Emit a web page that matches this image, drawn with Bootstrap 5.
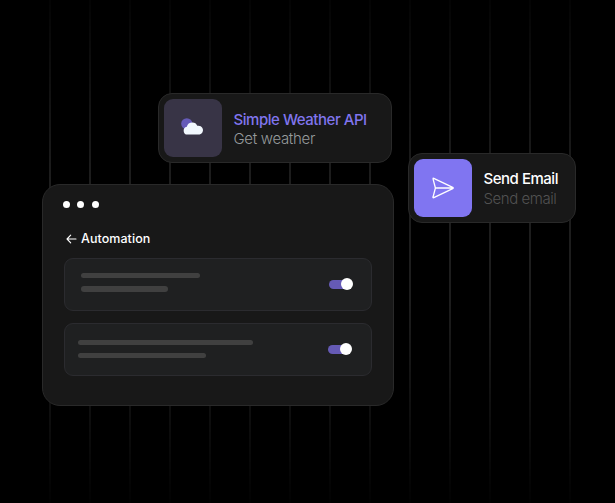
<!DOCTYPE html>
<html lang="en" data-bs-theme="dark">
<head>
<meta charset="utf-8">
<meta name="viewport" content="width=device-width, initial-scale=1">
<title>Automation</title>
<link rel="stylesheet" href="https://cdn.jsdelivr.net/npm/bootstrap@5.3.0/dist/css/bootstrap.min.css">
<style>
body{background:#000;font-family:Inter,"Liberation Sans",sans-serif}
.canvas{width:615px;height:503px}
.stripes{padding-left:49px;gap:38px;-webkit-mask-image:linear-gradient(#0002 0,#000 36%,#000 60%,#0001 100%);mask-image:linear-gradient(#0002 0,#000 36%,#000 60%,#0001 100%)}
.stripe{width:2px;flex:none;background:#1d1d1d}
.panel{background:#181818;border:1.5px solid #292929}
.tool{height:70px;border-radius:14px;padding-left:4.5px}
.tool-weather{left:158px;top:93px;width:234px}
.tool-weather .copy{padding-top:2px}
.tool-email{left:408px;top:153px;width:168px}
.tile{width:58px;height:58px;border-radius:9px;flex:none}
.tile-weather{background:#383446}
.tile-email{background:#8075f1}
.copy{margin-left:12px;padding-top:1.5px;font-size:15px;line-height:19.5px;white-space:nowrap}
.title{font-weight:500}
.weather-title{color:#8075ee;letter-spacing:-.46px}
.weather-sub{color:#969a9c;font-weight:300;letter-spacing:-.32px}
.email-title{color:#fff;letter-spacing:-.48px}
.email-sub{color:#525252;font-weight:300;letter-spacing:-.44px}
.win{left:42px;top:183.5px;width:351.5px;height:222px;border-radius:18px;padding:16px 20.5px 0 20.5px;border-width:1px}
.dots{gap:7.7px;height:7px;margin-left:-.5px}
.dot{width:7px;height:7px;background:#fff;margin-left:-.2px}
.heading{margin-top:21px;height:20px;padding-left:2px;gap:4.5px;font-size:12.5px;letter-spacing:.06px;font-weight:500;color:#fff;line-height:20px}
.step{width:308px;height:53px;background:#1f2021;border:1px solid #2b2b2f;border-radius:9px;padding:0 17.5px 0 16px}
.step-one{margin-top:9px}
.step-two{margin-top:12px;padding:0 18.5px 0 13.5px}
.bars{gap:8px}
.step-one .bars{margin-bottom:3.5px}
.line{height:5.3px;background:#404040}
.switch{width:24px;height:12px}
.switch::before{content:"";width:18px;height:9px;border-radius:5px 0 0 5px;background:#655ab5;margin-right:-6px}
.knob{width:12px;height:12px;background:#fff}
</style>
<script src="https://cdn.jsdelivr.net/npm/bootstrap@5.3.0/dist/js/bootstrap.bundle.min.js"></script>
</head>
<body class="overflow-hidden">
<main class="canvas position-relative overflow-hidden">
  <div class="stripes d-flex h-100" aria-hidden="true">
    <i class="stripe"></i><i class="stripe"></i><i class="stripe"></i><i class="stripe"></i><i class="stripe"></i><i class="stripe"></i><i class="stripe"></i><i class="stripe"></i><i class="stripe"></i><i class="stripe"></i><i class="stripe"></i><i class="stripe"></i><i class="stripe"></i><i class="stripe"></i>
  </div>

  <article class="panel tool tool-weather position-absolute d-flex align-items-center">
    <div class="tile tile-weather d-flex align-items-center justify-content-center">
      <svg width="24" height="20" viewBox="0 0 24 20"><circle cx="5.8" cy="5.8" r="5.6" fill="#665bb8"/><path d="M6.4 16.6A4 4 0 0 1 5.8 8.7Q6.8 4.4 11.4 4.4 15 4.4 16.3 7.8A4.5 4.5 0 1 1 18.6 16.6Z" fill="#f2f8fe"/></svg>
    </div>
    <div class="copy">
      <div class="title weather-title"><span>Simple Weather API</span></div>
      <div class="weather-sub"><span>Get weather</span></div>
    </div>
  </article>

  <article class="panel tool tool-email position-absolute d-flex align-items-center">
    <div class="tile tile-email d-flex align-items-center justify-content-center">
      <svg width="24" height="22" viewBox="0 0 24 22" fill="none" stroke="#fff" stroke-width="1.3" stroke-linejoin="round" stroke-linecap="round"><path d="M2.3 1.8Q1.6 1 2.8 1.3L21.7 10.3Q22.7 11 21.7 11.6L2.8 20.7Q1.6 21 2.1 19.8L4.4 11 2.1 2.2ZM4.4 11H22"/></svg>
    </div>
    <div class="copy">
      <div class="title email-title"><span>Send Email</span></div>
      <div class="email-sub"><span>Send email</span></div>
    </div>
  </article>

  <section class="panel win position-absolute">
    <div class="dots d-flex"><i class="dot rounded-circle"></i><i class="dot rounded-circle"></i><i class="dot rounded-circle"></i></div>
    <div class="heading d-flex align-items-center">
      <svg width="11" height="10" viewBox="0 0 11 10" fill="none" stroke="#fff" stroke-width="1.1" stroke-linecap="round" stroke-linejoin="round"><path d="M10 5H1M4.7 1.2 1 5 4.7 8.8"/></svg>
      <span>Automation</span>
    </div>
    <div class="step step-one d-flex align-items-center justify-content-between">
      <div class="bars d-flex flex-column"><div class="line rounded-pill" style="width:119px"></div><div class="line rounded-pill" style="width:87px"></div></div>
      <div class="switch d-flex align-items-center"><span class="knob rounded-circle"></span></div>
    </div>
    <div class="step step-two d-flex align-items-center justify-content-between">
      <div class="bars d-flex flex-column"><div class="line rounded-pill" style="width:175px"></div><div class="line rounded-pill" style="width:128px"></div></div>
      <div class="switch d-flex align-items-center"><span class="knob rounded-circle"></span></div>
    </div>
  </section>
</main>
</body>
</html>
